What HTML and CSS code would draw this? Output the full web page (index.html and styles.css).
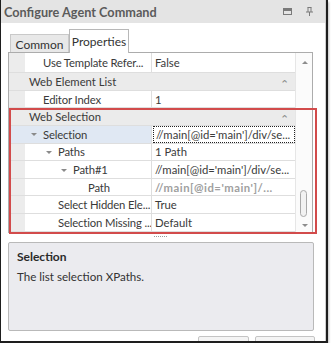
FILE: index.html
```html
<!DOCTYPE html>
<html lang="en">
<head>
    <meta charset="UTF-8">
    <title>Configure Agent Command</title>
    <link rel="stylesheet" href="styles.css">
</head>
<body>
<div class="frame">
    <div class="titlebar">
        <span class="title">Configure Agent Command</span>
        <span class="tb-icons">
            <svg width="9" height="7" viewBox="0 0 9 7"><rect x="0.5" y="0.5" width="8" height="6" fill="none" stroke="#7a7a7a"/><rect x="1" y="1" width="7" height="2" fill="#7a7a7a"/></svg>
            <svg width="7" height="9" viewBox="0 0 7 9"><path d="M1.5 0.5h4M2 0.5v4.5M5 0.5v4.5M0 5h7M3.5 5v4" stroke="#7a7a7a" fill="none"/></svg>
        </span>
    </div>

    <div class="content">
        <div class="tabs">
            <div class="tab">Common</div>
            <div class="tab active">Properties</div>
        </div>

        <div class="grid">
            <div class="rows">
                <div class="row first">
                    <div class="gutter"></div>
                    <div class="name pad1">Use Template Refer...</div>
                    <div class="value">False</div>
                </div>
                <div class="row category">
                    <div class="cat-name">Web Element List</div>
                    <span class="chev">&#8963;</span>
                </div>
                <div class="row">
                    <div class="gutter"></div>
                    <div class="name pad1">Editor Index</div>
                    <div class="value">1</div>
                </div>
                <div class="row category">
                    <div class="cat-name">Web Selection</div>
                    <span class="chev">&#8963;</span>
                </div>
                <div class="row selected">
                    <div class="gutter"></div>
                    <div class="name pad1"><span class="arrow"></span>Selection</div>
                    <div class="value"><span class="focus">//main[@id='main']/div/se...</span></div>
                </div>
                <div class="row">
                    <div class="gutter"></div>
                    <div class="name pad2"><span class="arrow"></span>Paths</div>
                    <div class="value">1 Path</div>
                </div>
                <div class="row">
                    <div class="gutter"></div>
                    <div class="name pad3"><span class="arrow"></span>Path#1</div>
                    <div class="value">//main[@id='main']/div/se...</div>
                </div>
                <div class="row">
                    <div class="gutter"></div>
                    <div class="name pad4">Path</div>
                    <div class="value readonly">//main[@id='main']/...</div>
                </div>
                <div class="row">
                    <div class="gutter"></div>
                    <div class="name pad2">Select Hidden Ele...</div>
                    <div class="value">True</div>
                </div>
                <div class="row">
                    <div class="gutter"></div>
                    <div class="name pad2">Selection Missing ...</div>
                    <div class="value">Default</div>
                </div>
            </div>
            <div class="scrollbar">
                <span class="sb-up"></span>
                <span class="sb-thumb"></span>
                <span class="sb-down"></span>
            </div>
        </div>

        <div class="splitter"><span class="grip"></span></div>

        <div class="desc">
            <div class="desc-title">Selection</div>
            <div class="desc-text">The list selection XPaths.</div>
        </div>

        <div class="buttons">
            <span class="btn btn-ok"></span>
            <span class="btn btn-cancel"></span>
        </div>
    </div>

    <!-- annotation box -->
    <div class="highlight"></div>
</div>
</body>
</html>
```

FILE: styles.css
```css
body {
    margin: 0;
    background: #fff;
    font-family: Lato, "Noto Sans", sans-serif;
    color: #3a3a3a;
}

.frame {
    position: relative;
    width: 325px;
    height: 341px;
    border-left: 1px solid #1e1e1e;
    border-right: 2px solid #1e1e1e;
    border-bottom: 2px solid #1e1e1e;
    box-shadow: 1px 2px 2px #c4c4c4;
    background: #fff;
    overflow: hidden;
}

/* Title bar */
.titlebar {
    height: 23px;
    background: #e4e4e4;
    display: flex;
    align-items: center;
    justify-content: space-between;
    padding: 0 12px 0 3px;
    border-right: 1px solid #cfcfcf;
}

.title {
    font-size: 12.7px;
    font-weight: bold;
    color: #5b5b5b;
}

.tb-icons {
    display: flex;
    align-items: center;
    gap: 14px;
}

.content {
    height: 318px;
    border-right: 1px solid #cfcfcf;
    padding-left: 7px;
}

/* Tabs */
.tabs {
    display: flex;
    align-items: flex-end;
    height: 29px;
    padding-left: 2px;
}

.tab {
    height: 18px;
    width: 59px;
    box-sizing: border-box;
    background: #e8e8e8;
    border: 1px solid #c9c9c9;
    border-bottom: none;
    font-size: 12px;
    text-align: center;
    line-height: 19px;
    color: #333;
}

.tab.active {
    height: 24px;
    width: 60px;
    background: #fff;
    border-color: #b8b8b8;
    line-height: 23px;
    margin-bottom: -1px;
    position: relative;
    z-index: 1;
}

/* Property grid */
.grid {
    display: flex;
    width: 305px;
    height: 181px;
    box-sizing: border-box;
    border: 1px solid #acacac;
    overflow: hidden;
}

.rows {
    width: 286px;
}

.row {
    display: flex;
    height: 17.6px;
    box-sizing: border-box;
    border-bottom: 1px solid #dedede;
    font-size: 11.3px;
    line-height: 16px;
}

.row.first {
    height: 20.3px;
    align-items: flex-end;
}

.gutter {
    width: 16px;
    background: #ececec;
    align-self: stretch;
}

.name {
    width: 127px;
    box-sizing: border-box;
    border-right: 1px solid #dedede;
    white-space: nowrap;
    overflow: hidden;
    display: flex;
    align-items: center;
    align-self: stretch;
    padding-top: 1px;
    letter-spacing: -0.15px;
}

.pad1 { padding-left: 18px; }
.pad2 { padding-left: 33px; }
.pad3 { padding-left: 48px; }
.pad4 { padding-left: 63px; }

.arrow {
    width: 0;
    height: 0;
    border-left: 3px solid transparent;
    border-right: 3px solid transparent;
    border-top: 3px solid #8a8a8a;
    margin-left: -12px;
    margin-right: 6px;
}

.value {
    flex: 1;
    padding-left: 3px;
    padding-top: 1px;
    white-space: nowrap;
    overflow: hidden;
    display: flex;
    align-items: center;
    align-self: stretch;
}

.value.readonly {
    color: #a0a0a0;
    font-weight: bold;
    letter-spacing: 0.5px;
}

.row.selected .gutter,
.row.selected .name {
    background: #e0e8f3;
}

.focus {
    display: block;
    width: 138px;
    margin-left: -2px;
    padding-left: 2px;
    height: 15px;
    line-height: 15px;
    border: 1px dotted #222;
}

.row.category {
    background: #ebebeb;
    justify-content: space-between;
    align-items: center;
}

.cat-name {
    padding-left: 20px;
    padding-top: 1px;
}

.chev {
    color: #8a8a8a;
    font-size: 11px;
    padding-right: 6px;
    line-height: 1;
    margin-top: 4px;
}

.scrollbar {
    width: 17px;
    border-left: 1px solid #e6e6e6;
    background: #fbfbfb;
    position: relative;
}

.sb-up, .sb-down {
    position: absolute;
    left: 6px;
    width: 0;
    height: 0;
    border-left: 3px solid transparent;
    border-right: 3px solid transparent;
}

.sb-up {
    top: 8px;
    border-bottom: 3px solid #8c8c8c;
}

.sb-down {
    top: 171px;
    border-top: 3px solid #8c8c8c;
}

.sb-thumb {
    position: absolute;
    left: 4px;
    top: 137px;
    width: 5px;
    height: 25px;
    border: 1px solid #a9a9a9;
    border-radius: 4px;
    background: #f2f2f2;
}

/* Splitter */
.splitter {
    height: 9px;
    position: relative;
}

.grip {
    position: absolute;
    left: 146px;
    top: 3px;
    width: 13px;
    border-top: 1px dotted #9a9a9a;
}

/* Description */
.desc {
    width: 306px;
    height: 89px;
    box-sizing: border-box;
    background: #ebebef;
    border: 1px solid #b9b9b9;
    border-radius: 2px;
    padding: 6px 8px;
    font-size: 11.6px;
}

.desc-title {
    font-weight: bold;
    color: #2a2a2a;
    font-size: 12px;
    margin-bottom: 6px;
}

.desc-text {
    color: #333;
}

.buttons {
    position: relative;
    height: 12px;
}

.btn {
    position: absolute;
    top: 5px;
    height: 8px;
    border: 1px solid #c4c4c4;
    border-radius: 2px;
    background: #f4f4f4;
}

.btn-ok { left: 190px; width: 49px; }
.btn-cancel { left: 247px; width: 58px; }

/* Red annotation box */
.highlight {
    position: absolute;
    left: 8px;
    top: 108px;
    width: 304px;
    height: 122px;
    border: 2px solid #d24b4b;
    pointer-events: none;
}
```
